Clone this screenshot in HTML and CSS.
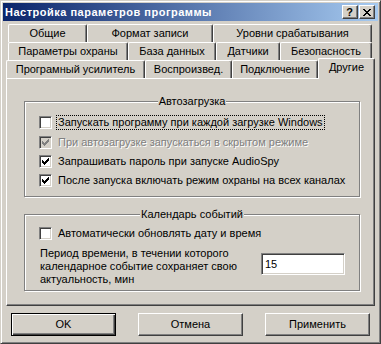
FILE: index.html
```html
<!DOCTYPE html>
<html>
<head>
<meta charset="utf-8">
<title>Настройка параметров программы</title>
<link rel="stylesheet" href="styles.css">
</head>
<body>
<div class="window">
  <div class="titlebar">
    <span class="title">Настройка параметров программы</span>
    <div class="tbtns">
      <span class="tbtn help">?</span>
      <span class="tbtn close"><svg width="8" height="7" viewBox="0 0 8 7" shape-rendering="crispEdges"><path d="M0 0h2v1H0zM6 0h2v1H6zM1 1h2v1H1zM5 1h2v1H5zM2 2h4v1H2zM3 3h2v1H3zM2 4h4v1H2zM1 5h2v1H1zM5 5h2v1H5zM0 6h2v1H0zM6 6h2v1H6z" fill="#000"/></svg></span>
    </div>
  </div>

  <div class="tabs">
    <div class="tabrow back">
      <div class="tab t-obsh">Общие</div>
      <div class="tab t-format">Формат записи</div>
      <div class="tab t-urovni">Уровни срабатывания</div>
    </div>
    <div class="tabrow back">
      <div class="tab t-param">Параметры охраны</div>
      <div class="tab t-baza">База данных</div>
      <div class="tab t-dat">Датчики</div>
      <div class="tab t-bez">Безопасность</div>
    </div>
    <div class="tabrow front">
      <div class="tab t-usil">Програмный усилитель</div>
      <div class="tab t-vospr">Воспроизвед.</div>
      <div class="tab t-podkl">Подключение</div>
      <div class="tab sel t-drug">Другие</div>
    </div>
  </div>

  <div class="panel">
    <div class="group g1">
      <div class="gtitle">Автозагрузка</div>
      <div class="check r19 first">
        <span class="box"></span>
        <span class="lbl focus">Запускать программу при каждой загрузке Windows</span>
      </div>
      <div class="check r20">
        <span class="box disabled"><svg width="7" height="7" viewBox="0 0 7 7" shape-rendering="crispEdges"><path class="mark" d="M6 0h1v1H6zM5 1h2v1H5zM0 2h1v1H0zM4 2h3v1H4zM0 3h2v1H0zM3 3h3v1H3zM0 4h5v1H0zM1 5h3v1H1zM2 6h1v1H2z"/></svg></span>
        <span class="lbl dis">При автозагрузке запускаться в скрытом режиме</span>
      </div>
      <div class="check r19">
        <span class="box"><svg width="7" height="7" viewBox="0 0 7 7" shape-rendering="crispEdges"><path class="mark" d="M6 0h1v1H6zM5 1h2v1H5zM0 2h1v1H0zM4 2h3v1H4zM0 3h2v1H0zM3 3h3v1H3zM0 4h5v1H0zM1 5h3v1H1zM2 6h1v1H2z"/></svg></span>
        <span class="lbl">Запрашивать пароль при запуске AudioSpy</span>
      </div>
      <div class="check r19">
        <span class="box"><svg width="7" height="7" viewBox="0 0 7 7" shape-rendering="crispEdges"><path class="mark" d="M6 0h1v1H6zM5 1h2v1H5zM0 2h1v1H0zM4 2h3v1H4zM0 3h2v1H0zM3 3h3v1H3zM0 4h5v1H0zM1 5h3v1H1zM2 6h1v1H2z"/></svg></span>
        <span class="lbl">После запуска включать режим охраны на всех каналах</span>
      </div>
    </div>

    <div class="group g2">
      <div class="gtitle">Календарь событий</div>
      <div class="check r19 first2">
        <span class="box"></span>
        <span class="lbl">Автоматически обновлять дату и время</span>
      </div>
      <div class="period">
        <div class="ptext">Период времени, в течении которого<br>календарное событие сохраняет свою<br>актуальность, мин</div>
        <div class="edit">15</div>
      </div>
    </div>
  </div>

  <div class="buttons">
    <div class="btn default">OK</div>
    <div class="btn">Отмена</div>
    <div class="btn">Применить</div>
  </div>
</div>
</body>
</html>
```

FILE: styles.css
```css
* { box-sizing: border-box; }
html, body { margin: 0; padding: 0; }
body {
  width: 381px;
  height: 344px;
  overflow: hidden;
  background: #d4d0c8;
  font-family: "Liberation Sans", Arial, sans-serif;
  font-size: 11px;
  color: #000;
}

.window {
  width: 381px;
  height: 344px;
  border: 1px solid;
  border-color: #d4d0c8 #404040 #404040 #d4d0c8;
  box-shadow: inset 1px 1px #fff, inset -1px -1px #808080;
  padding: 2px;
  display: flex;
  flex-direction: column;
  background: #d4d0c8;
}

/* title bar */
.titlebar {
  height: 18px;
  flex: none;
  background: linear-gradient(to right, #0a246a, #a6caf0);
  display: flex;
  align-items: center;
  justify-content: space-between;
  padding: 0 3px 0 2px;
}
.title {
  color: #fff;
  font-weight: bold;
  font-size: 11px;
  letter-spacing: 0.5px;
  line-height: 18px;
  white-space: nowrap;
}
.tbtns { display: flex; gap: 1px; }
.tbtn {
  width: 16px;
  height: 14px;
  background: #d4d0c8;
  border: 1px solid;
  border-color: #fff #404040 #404040 #fff;
  box-shadow: inset -1px -1px #808080;
  display: flex;
  align-items: center;
  justify-content: center;
}
.help {
  font-weight: bold;
  font-size: 11px;
  line-height: 12px;
  padding-right: 1px;
}
.close svg { display: block; margin-right: 1px; }

/* tabs */
.tabs {
  margin: 3px 3px 0;
  flex: none;
}
.tabrow {
  display: flex;
  height: 18px;
  align-items: flex-start;
}
.tabrow.back { padding-left: 2px; }
.tab {
  height: 18px;
  flex: none;
  border-left: 1px solid #fff;
  border-top: 1px solid #fff;
  border-right: 1px solid #404040;
  border-top-left-radius: 2px;
  border-top-right-radius: 2px;
  box-shadow: inset -1px 0 #808080;
  text-align: center;
  line-height: 17px;
  white-space: nowrap;
  background: #d4d0c8;
}
.tab.sel {
  height: 21px;
  margin-top: -2px;
  position: relative;
  z-index: 1;
}
.t-obsh { width: 79px; }
.t-format { width: 126px; }
.t-urovni { width: 159px; }
.t-param { width: 120px; }
.t-baza { width: 88px; }
.t-dat { width: 64px; }
.t-bez { width: 92px; }
.t-usil { width: 139px; }
.t-vospr { width: 87px; }
.t-podkl { width: 86px; }
.t-drug { width: 57px; }

/* panel */
.panel {
  flex: none;
  height: 228px;
  margin: 0 3px;
  border: 1px solid;
  border-color: #fff #404040 #404040 #fff;
  box-shadow: inset -1px -1px #808080;
  padding: 22px 14px 0 17px;
}

.group {
  border: 1px solid #808080;
  box-shadow: inset 1px 1px #fff, 1px 1px #fff;
  padding: 0 14px;
}
.g1 { padding-bottom: 6px; }
.g2 { margin-top: 17px; padding-bottom: 4px; }
.gtitle {
  display: table;
  margin: -7px auto 0;
  padding: 0 1px;
  line-height: 13px;
  background: #d4d0c8;
  white-space: nowrap;
}

.check {
  display: flex;
  align-items: center;
}
.r19 { height: 19px; }
.r20 { height: 20px; }
.check.first { margin-top: 5px; }
.check.first2 { margin-top: 3px; }

.box {
  width: 13px;
  height: 13px;
  flex: none;
  border: 1px solid;
  border-color: #808080 #fff #fff #808080;
  box-shadow: inset 1px 1px #404040, inset -1px -1px #d4d0c8;
  background: #fff;
  padding: 2px;
}
.box svg { display: block; }
.mark { fill: #000; }
.box.disabled { background: #d4d0c8; }
.box.disabled .mark { fill: #808080; }

.lbl {
  margin-left: 4px;
  padding: 0 1px;
  border: 1px dotted transparent;
  line-height: 13px;
  white-space: nowrap;
}
.lbl.focus { border-color: #000; }
.lbl.dis {
  color: #808080;
  text-shadow: 1px 1px 0 #fff;
}

.period {
  display: flex;
  align-items: flex-start;
  justify-content: space-between;
  margin-top: 4px;
}
.ptext {
  line-height: 13px;
  margin-left: 1px;
  white-space: nowrap;
}
.edit {
  width: 84px;
  height: 22px;
  margin-top: 6px;
  background: #fff;
  border: 1px solid;
  border-color: #808080 #fff #fff #808080;
  box-shadow: inset 1px 1px #404040, inset -1px -1px #d4d0c8;
  padding: 0 3px;
  line-height: 20px;
}

/* buttons */
.buttons {
  display: flex;
  gap: 22px;
  margin-top: 7px;
  padding-left: 8px;
  flex: none;
}
.btn {
  width: 105px;
  height: 23px;
  border: 1px solid;
  border-color: #fff #404040 #404040 #fff;
  box-shadow: inset -1px -1px #808080;
  text-align: center;
  line-height: 21px;
}
.btn.default {
  border-color: #000;
  box-shadow: inset 1px 1px #fff, inset -1px -1px #404040, inset -2px -2px #808080;
}
```
